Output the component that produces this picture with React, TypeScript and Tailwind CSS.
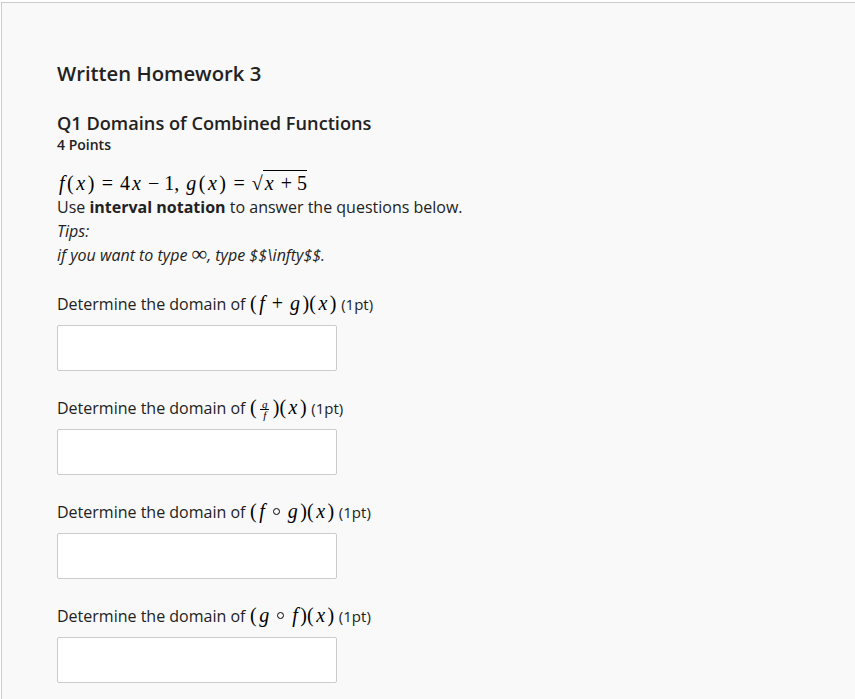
import React from 'react';

const mathFont = { fontFamily: '"Liberation Serif", "DejaVu Serif", serif' };

function V({ children }: { children: React.ReactNode }) {
  return <span className="italic px-[2px]">{children}</span>;
}

function P({ children }: { children: React.ReactNode }) {
  return <span className="px-[0.5px]">{children}</span>;
}

function Op({ children }: { children: React.ReactNode }) {
  return <span className="mx-[5px]">{children}</span>;
}

function Rel({ children }: { children: React.ReactNode }) {
  return <span className="mx-[7px]">{children}</span>;
}

function Compose() {
  return (
    <span className="mx-[6px] inline-block h-[7px] w-[7px] rounded-full border border-black align-[3px]" />
  );
}

function Math({ children }: { children: React.ReactNode }) {
  return (
    <span style={mathFont} className="text-[20px] text-black whitespace-nowrap">
      {children}
    </span>
  );
}

function Frac() {
  return (
    <span className="mx-[3px] inline-flex flex-col items-center align-middle text-[11px] leading-[10px]">
      <span className="italic">g</span>
      <span className="h-px w-[9px] bg-black" />
      <span className="italic">f</span>
    </span>
  );
}

function AnswerField({ label }: { label: React.ReactNode }) {
  return (
    <div className="mt-6">
      <div className="h-6 text-[16px] leading-6">
        Determine the domain of {label} <span className="text-[15px]">(1pt)</span>
      </div>
      <input
        type="text"
        aria-label="answer"
        className="mt-[10px] block h-[46px] w-[280px] rounded-[2px] border border-[#cccccc] bg-white"
      />
    </div>
  );
}

export default function App() {
  return (
    <div
      className="min-h-[699px] bg-white pl-px pt-[2px]"
      style={{ fontFamily: '"Open Sans", "Noto Sans", sans-serif' }}
    >
      <section className="min-h-[697px] border-l border-t border-[#cccccc] bg-[#f9f9f9] pl-[55px] pt-[56px] text-[#222222]">
        <h1 className="h-7 text-[20.3px] font-semibold leading-7">Written Homework 3</h1>

        <h2 className="mt-[24px] h-6 text-[18.2px] font-semibold leading-6">
          Q1 Domains of Combined Functions
        </h2>
        <div className="mt-px h-[18px] text-[14px] font-semibold leading-[18px]">4 Points</div>

        <div className="mt-[17px] h-6 leading-6">
          <Math>
            <V>f</V>
            <P>(</P>
            <V>x</V>
            <P>)</P>
            <Rel>=</Rel>4<V>x</V>
            <Op>−</Op>1, <V>g</V>
            <P>(</P>
            <V>x</V>
            <P>)</P>
            <Rel>=</Rel>
            <span>√</span>
            <span className="border-t border-black pt-[1px]">
              <V>x</V>
              <Op>+</Op>5
            </span>
          </Math>
        </div>
        <p className="h-6 text-[16px] leading-6">
          Use <strong className="font-bold">interval notation</strong> to answer the questions below.
        </p>
        <p className="h-6 text-[16px] italic leading-6">Tips:</p>
        <p className="h-6 text-[16px] italic leading-6">
          if you want to type <span style={mathFont} className="not-italic text-[22px] leading-none">∞</span>, type
          $$\infty$$.
        </p>

        <AnswerField
          label={
            <Math>
              <P>(</P>
              <V>f</V>
              <Op>+</Op>
              <V>g</V>
              <P>)(</P>
              <V>x</V>
              <P>)</P>
            </Math>
          }
        />
        <AnswerField
          label={
            <Math>
              <P>(</P>
              <Frac />
              <P>)(</P>
              <V>x</V>
              <P>)</P>
            </Math>
          }
        />
        <AnswerField
          label={
            <Math>
              <P>(</P>
              <V>f</V>
              <Compose />
              <V>g</V>
              <P>)(</P>
              <V>x</V>
              <P>)</P>
            </Math>
          }
        />
        <AnswerField
          label={
            <Math>
              <P>(</P>
              <V>g</V>
              <Compose />
              <V>f</V>
              <P>)(</P>
              <V>x</V>
              <P>)</P>
            </Math>
          }
        />
      </section>
    </div>
  );
}
